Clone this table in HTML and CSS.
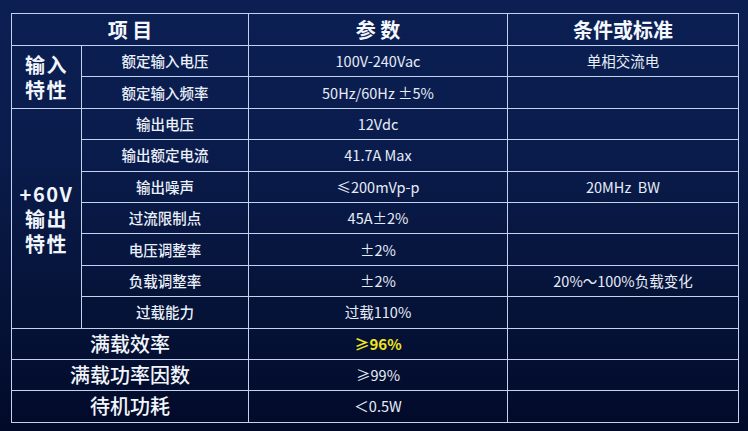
FILE: index.html
```html
<!DOCTYPE html>
<html lang="zh-CN">
<head>
<meta charset="utf-8">
<title>参数表</title>
<link rel="stylesheet" href="styles.css">
</head>
<body>
<div class="page">
<table class="spec">
  <colgroup>
    <col class="c1"><col class="c2"><col class="c3"><col class="c4">
  </colgroup>
  <thead>
    <tr class="head">
      <th colspan="2">项&nbsp;目</th>
      <th>参&nbsp;数</th>
      <th>条件或标准</th>
    </tr>
  </thead>
  <tbody>
    <tr>
      <td rowspan="2" class="group"><span class="ln">输入</span><span class="ln">特性</span></td>
      <td class="item">额定输入电压</td>
      <td class="val">100V-240Vac</td>
      <td class="val">单相交流电</td>
    </tr>
    <tr>
      <td class="item">额定输入频率</td>
      <td class="val">50Hz/60Hz ±5%</td>
      <td class="val"></td>
    </tr>
    <tr>
      <td rowspan="7" class="group"><span class="ln">+60V</span><span class="ln">输出</span><span class="ln">特性</span></td>
      <td class="item">输出电压</td>
      <td class="val">12Vdc</td>
      <td class="val"></td>
    </tr>
    <tr>
      <td class="item">输出额定电流</td>
      <td class="val">41.7A Max</td>
      <td class="val"></td>
    </tr>
    <tr>
      <td class="item">输出噪声</td>
      <td class="val">≤200mVp-p</td>
      <td class="val">20MHz&nbsp; BW</td>
    </tr>
    <tr>
      <td class="item">过流限制点</td>
      <td class="val">45A±2%</td>
      <td class="val"></td>
    </tr>
    <tr>
      <td class="item">电压调整率</td>
      <td class="val">±2%</td>
      <td class="val"></td>
    </tr>
    <tr>
      <td class="item">负载调整率</td>
      <td class="val">±2%</td>
      <td class="val">20%～100%负载变化</td>
    </tr>
    <tr>
      <td class="item">过载能力</td>
      <td class="val">过载110%</td>
      <td class="val"></td>
    </tr>
    <tr>
      <td colspan="2" class="wide">满载效率</td>
      <td class="val hl">≥96%</td>
      <td class="val"></td>
    </tr>
    <tr>
      <td colspan="2" class="wide">满载功率因数</td>
      <td class="val">≥99%</td>
      <td class="val"></td>
    </tr>
    <tr>
      <td colspan="2" class="wide">待机功耗</td>
      <td class="val">＜0.5W</td>
      <td class="val"></td>
    </tr>
  </tbody>
</table>
</div>
</body>
</html>
```

FILE: styles.css
```css
html, body {
  margin: 0;
  padding: 0;
}
body {
  width: 748px;
  height: 431px;
  overflow: hidden;
  background: linear-gradient(to bottom, #0b1f53 0%, #0a1c4c 35%, #051236 75%, #020a29 100%);
  font-family: "Noto Sans CJK SC", "Noto Sans", sans-serif;
  color: #eef2fb;
}
.page {
  padding: 13px 0 0 11px;
}
.spec {
  border-collapse: collapse;
  table-layout: fixed;
  width: 727px;
}
.c1 { width: 70px; }
.c2 { width: 167px; }
.c3 { width: 259px; }
.c4 { width: 231px; }
.spec tr {
  height: 31.4px;
}
.spec tr.head {
  height: 32px;
}
.spec th,
.spec td {
  border: 1.5px solid #c3d2ee;
  text-align: center;
  vertical-align: middle;
  padding: 0;
  line-height: 20px;
}
.head th {
  font-size: 20px;
  font-weight: 700;
  color: #f4f7fd;
}
.group {
  font-size: 20px;
  font-weight: 700;
  letter-spacing: 1.5px;
  color: #f1f5fc;
}
.ln {
  display: block;
  line-height: 25px;
}
.item {
  font-size: 14.5px;
  font-weight: 500;
  color: #eaf0fa;
}
.val {
  font-size: 14.5px;
  font-weight: 400;
  color: #e6ecf8;
}
.wide {
  font-size: 20px;
  font-weight: 500;
  color: #f1f5fc;
}
.hl {
  color: #f2e41c;
  font-weight: 700;
  font-size: 15px;
}
```
